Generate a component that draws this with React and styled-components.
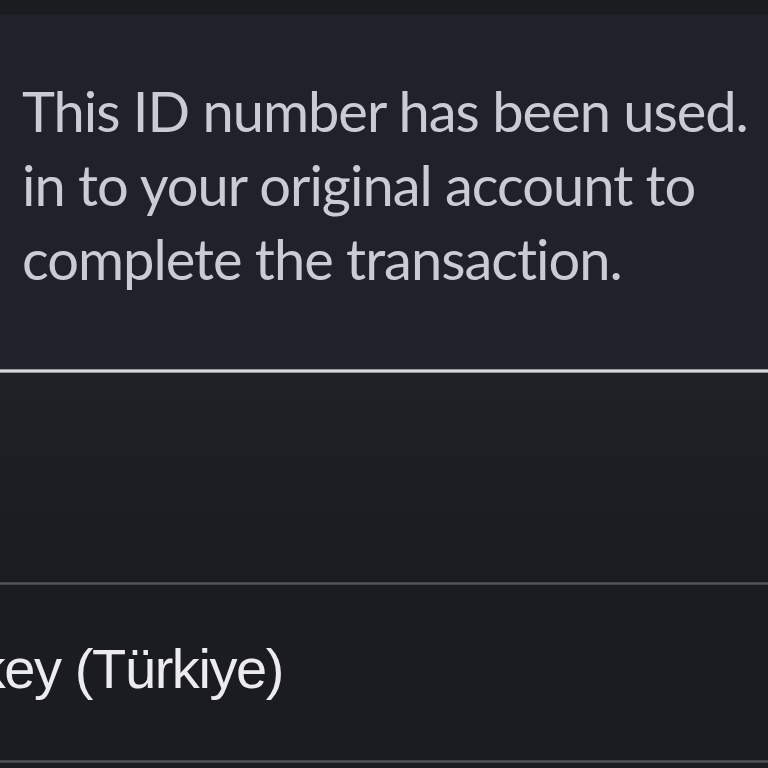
import styled, { createGlobalStyle } from "styled-components";

const GlobalStyle = createGlobalStyle`
  html, body {
    margin: 0;
    padding: 0;
    background: #1b1c21;
    overflow: hidden;
  }
`;

const Page = styled.div`
  width: 768px;
  height: 768px;
  display: flex;
  flex-direction: column;
  overflow: hidden;
  background: #1b1c21;
`;

const TopBar = styled.div`
  height: 15px;
  flex-shrink: 0;
  background: #1b1c20;
`;

const Notice = styled.div`
  flex-shrink: 0;
  height: 354px;
  box-sizing: border-box;
  padding: 59px 0 0 22px;
  background: #1f222b;
  overflow: hidden;
`;

const NoticeLine = styled.div`
  font-family: Lato, "Open Sans", sans-serif;
  font-size: 56px;
  letter-spacing: -1px;
  font-variant-ligatures: none;
  line-height: 74px;
  color: #c9ccd3;
  white-space: nowrap;
`;

const Divider = styled.div`
  flex-shrink: 0;
  height: ${(p) => (p.$bright ? "4px" : "3px")};
  background: ${(p) =>
    p.$bright
      ? "linear-gradient(#5a5c62 0, #d6d7da 25%, #d6d7da 75%, #55575c 100%)"
      : "linear-gradient(#3a3b41 0, #55565c 50%, #3a3b41 100%)"};
`;

const Spacer = styled.div`
  flex-shrink: 0;
  height: 209px;
  background: linear-gradient(#202127, #1b1c21);
`;

const CountryRow = styled.div`
  flex-shrink: 0;
  height: 175px;
  display: flex;
  align-items: center;
  padding-bottom: 8px;
  box-sizing: border-box;
  background: #1b1c21;
  overflow: hidden;
`;

const CountryName = styled.span`
  font-family: "Liberation Sans", Arial, sans-serif;
  font-size: 56px;
  letter-spacing: -1.4px;
  color: #ececee;
  white-space: nowrap;
  margin-left: -100px;
`;

export default function App() {
  return (
    <>
      <GlobalStyle />
      <Page>
        <TopBar />
        <Notice>
          <NoticeLine>This ID number has been used.</NoticeLine>
          <NoticeLine>in to your original account to</NoticeLine>
          <NoticeLine>complete the transaction.</NoticeLine>
        </Notice>
        <Divider $bright />
        <Spacer />
        <Divider />
        <CountryRow>
          <CountryName>Turkey (Türkiye)</CountryName>
        </CountryRow>
        <Divider />
      </Page>
    </>
  );
}
